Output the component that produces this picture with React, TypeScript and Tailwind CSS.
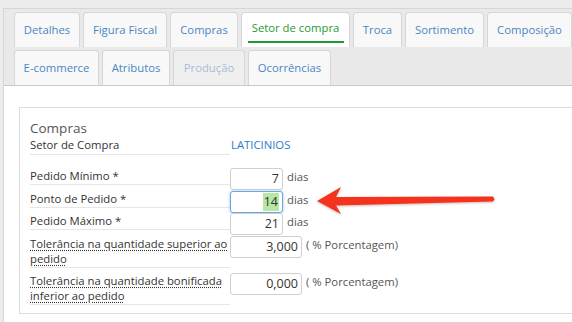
import React from "react";

const row1 = [
  { t: "Detalhes", w: "w-[66px]" },
  { t: "Figura Fiscal", w: "w-[84px]" },
  { t: "Compras", w: "w-[68px]" },
  { t: "Setor de compra", w: "w-[109px]", active: true },
  { t: "Troca", w: "w-[49px]" },
  { t: "Sortimento", w: "w-[79px]" },
  { t: "Composição", w: "w-[85px]" },
];
const row2 = [
  { t: "E-commerce", w: "w-[85px]" },
  { t: "Atributos", w: "w-[68px]" },
  { t: "Produção", w: "w-[72px]", disabled: true },
  { t: "Ocorrências", w: "w-[83px]" },
];

type Tab = { t: string; w: string; active?: boolean; disabled?: boolean };

function TabItem({ tab }: { tab: Tab }) {
  if (tab.active) {
    return (
      <div className={`${tab.w} h-[35px] shrink-0 rounded-t-[4px] border border-b-0 border-[#d6d6d6] bg-white flex flex-col items-center justify-center`}>
        <span className="text-[#1f9a31] leading-[16px] pt-[2px]">{tab.t}</span>
        <div className="mt-[5px] h-[2px] w-[96px] bg-[#1f9a31]" />
      </div>
    );
  }
  return (
    <div
      className={`${tab.w} h-[35px] shrink-0 rounded-t-[4px] border border-b-0 border-[#d6d6d6] flex items-center justify-center ${
        tab.disabled ? "bg-[#efefef] text-[#a9bdd3]" : "bg-[#f8f8f8] text-[#4a86c4]"
      }`}
    >
      {tab.t}
    </div>
  );
}

function Input({ w, children, focused }: { w: string; children: React.ReactNode; focused?: boolean }) {
  return (
    <div
      className={`${w} h-[22px] shrink-0 rounded-[3px] bg-white flex items-center justify-end pr-[3px] text-[#333] text-[12.5px] ${
        focused
          ? "border border-[#6aa6e0] shadow-[0_0_3px_rgba(102,166,233,0.7)]"
          : "border border-[#cfcfcf]"
      }`}
    >
      {children}
    </div>
  );
}

export default function App() {
  return (
    <div
      className="relative w-[572px] h-[322px] overflow-hidden bg-[#ececec] text-[11.3px]"
      style={{ fontFamily: '"Open Sans", "Noto Sans", sans-serif' }}
    >
      <div className="ml-[3px] mt-[8px] h-[314px] border-l border-t border-[#d6d6d6] bg-white flex flex-col">
        {/* tab header */}
        <div className="bg-[#e9e9e9] border-b border-[#c9c9c9] pl-[10px] pt-[3px] flex flex-col gap-[3px]">
          <div className="flex gap-[3px]">
            {row1.map((t) => (
              <TabItem key={t.t} tab={t} />
            ))}
          </div>
          <div className="flex gap-[3px]">
            {row2.map((t) => (
              <TabItem key={t.t} tab={t} />
            ))}
          </div>
        </div>
        {/* content */}
        <div className="pl-[15px] pt-[21px]">
          <div className="border border-r-0 border-[#dcdcdc] h-[207px] pl-[10px] pt-[11px] text-[#333]">
            <div className="text-[13.5px] text-[#555] leading-[18px]">Compras</div>
            <div className="flex items-start">
              <div className="w-[200px] border-b border-[#e6e6e6] leading-[16px] pb-[1px]">Setor de Compra</div>
              <div className="pl-[1px] leading-[16px] text-[#2c7dc8]">LATICINIOS</div>
            </div>

            <div className="mt-[13px] flex items-start">
              <div className="w-[200px] border-b border-[#e6e6e6] leading-[16px]">Pedido Mínimo *</div>
              <Input w="w-[53px]">7</Input>
              <span className="ml-[4px] leading-[18px] text-[#555]">dias</span>
            </div>
            <div className="mt-[1px] flex items-start">
              <div className="w-[200px] border-b border-[#e6e6e6] leading-[16px]">Ponto de Pedido *</div>
              <Input w="w-[53px]" focused>
                <span className="bg-[#b6e8a4] px-[1px]">14</span>
              </Input>
              <span className="ml-[4px] leading-[18px] text-[#555]">dias</span>
            </div>
            <div className="mt-[0px] flex items-start">
              <div className="w-[200px] border-b border-[#e6e6e6] leading-[16px]">Pedido Máximo *</div>
              <Input w="w-[53px]">21</Input>
              <span className="ml-[4px] leading-[18px] text-[#555]">dias</span>
            </div>
            <div className="mt-[1px] flex items-start">
              <div className="w-[200px] border-b border-[#e6e6e6] leading-[15px] pb-[1px]">
                <span className="underline decoration-dotted underline-offset-2">
                  Tolerância na quantidade superior ao pedido
                </span>
              </div>
              <Input w="w-[72px]">3,000</Input>
              <span className="ml-[4px] leading-[18px] text-[#555]">( % Porcentagem)</span>
            </div>
            <div className="mt-[5px] flex items-start">
              <div className="w-[200px] border-b border-[#e6e6e6] leading-[15px] pb-[1px]">
                <span className="underline decoration-dotted underline-offset-2">
                  Tolerância na quantidade bonificada inferior ao pedido
                </span>
              </div>
              <Input w="w-[72px]">0,000</Input>
              <span className="ml-[4px] leading-[18px] text-[#555]">( % Porcentagem)</span>
            </div>
          </div>
        </div>
      </div>

      {/* red arrow */}
      <svg className="absolute left-0 top-0" width="572" height="322" viewBox="0 0 572 322">
        <defs>
          <filter id="sh" x="-10%" y="-50%" width="120%" height="200%">
            <feDropShadow dx="0" dy="1" stdDeviation="1" floodColor="#000" floodOpacity="0.25" />
          </filter>
        </defs>
        <polygon
          points="317,201 341,187 336,197 493,196.5 494.5,199.5 493,201.5 336,205.5 341,214"
          fill="#f5301c"
          filter="url(#sh)"
        />
      </svg>
    </div>
  );
}
